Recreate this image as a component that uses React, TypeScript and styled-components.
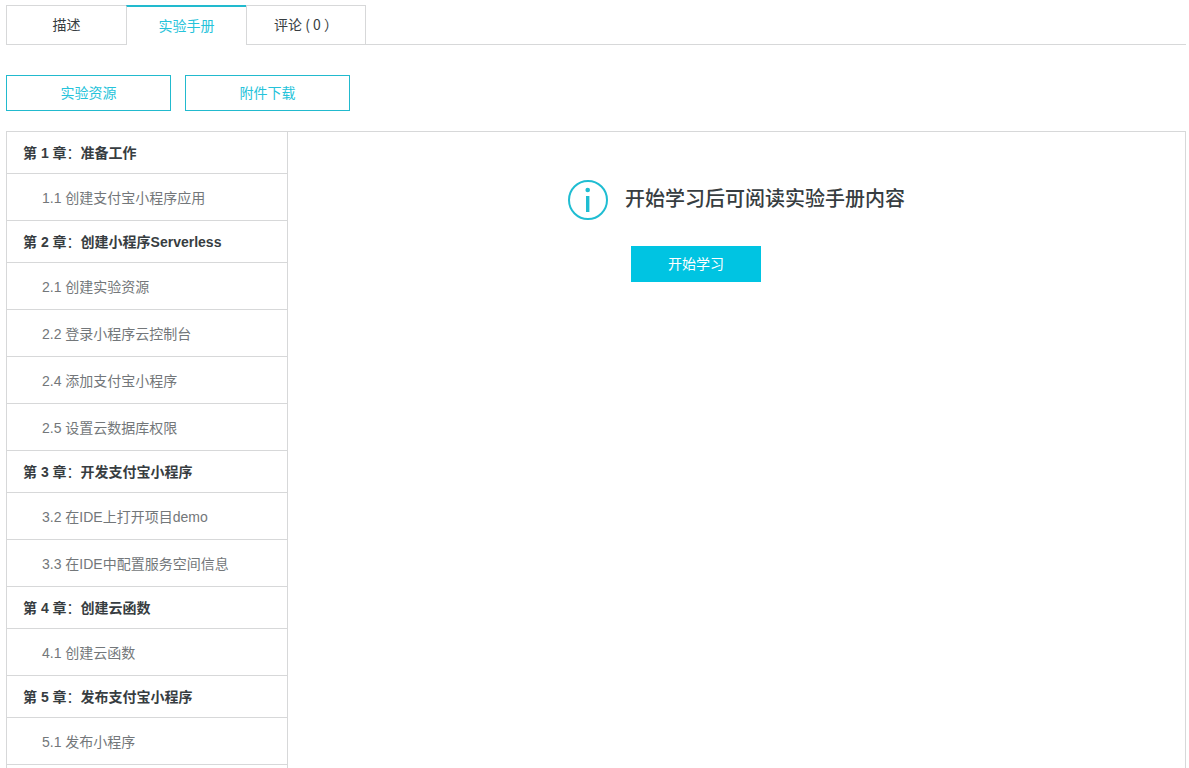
import React from "react";
import styled, { createGlobalStyle, css } from "styled-components";

const GlobalStyle = createGlobalStyle`
  * { box-sizing: border-box; }
  body {
    margin: 0;
    background: #fff;
    color: #373d41;
    font: 14px/20px "Liberation Sans", "Noto Sans CJK SC", sans-serif;
  }
  button { font: inherit; cursor: pointer; }
`;

const line = "#d7d8d9";
const accent = "#22bace";

const Page = styled.div`
  display: flex;
  flex-direction: column;
  height: 100vh;
  overflow: hidden;
  padding: 5px 3px 0 6px;
`;

const TabBar = styled.div`
  display: flex;
  flex-shrink: 0;
  height: 40px;

  &::after {
    content: "";
    flex: 1;
    border-bottom: 1px solid ${line};
  }
`;

const Tab = styled.button<{ $active?: boolean }>`
  width: 120px;
  padding: 0 0 2px;
  background: #fff;
  border: 1px solid ${line};
  border-right-width: 0;
  color: #373d41;
  font-family: "Noto Sans CJK SC", sans-serif;

  &:last-child {
    border-right-width: 1px;
  }

  ${(p) =>
    p.$active &&
    css`
      color: #25c3da;
      border-top: 2px solid ${accent};
      border-bottom: 0;
    `}
`;

const Actions = styled.div`
  display: flex;
  flex-shrink: 0;
  gap: 14px;
  margin: 30px 0 20px;
`;

const Button = styled.button<{ $primary?: boolean }>`
  width: ${(p) => (p.$primary ? 130 : 165)}px;
  height: 36px;
  padding: 0;
  background: ${(p) => (p.$primary ? "#00c4e2" : "#fff")};
  border: 1px solid ${(p) => (p.$primary ? "#00c4e2" : accent)};
  color: ${(p) => (p.$primary ? "#fff" : "#25c3da")};
`;

const Manual = styled.div`
  display: flex;
  flex: 1;
  min-height: 0;
  border: 1px solid ${line};
  border-bottom: 0;
`;

const Sidebar = styled.nav`
  flex: 0 0 281px;
  border-right: 1px solid ${line};
`;

const Chapter = styled.h2`
  display: flex;
  align-items: center;
  height: 42px;
  margin: 0;
  padding: 0 16px;
  border-bottom: 1px solid ${line};
  font-size: 14px;
  font-weight: 700;
`;

const Colon = styled.span`
  font-weight: 400;
`;

const Lessons = styled.ul`
  margin: 0;
  padding: 0;
  list-style: none;
`;

const Lesson = styled.a`
  display: flex;
  align-items: center;
  height: 47px;
  padding: 2px 16px 0 35px;
  border-bottom: 1px solid ${line};
  color: #73777a;
  text-decoration: none;
`;

const Content = styled.main`
  display: flex;
  flex: 1;
  justify-content: center;
  align-items: flex-start;
  gap: 17px;
  padding-top: 48px;
`;

const Notice = styled.div`
  display: flex;
  flex-direction: column;
  gap: 28px;
`;

const NoticeTitle = styled.h1`
  margin: 0;
  font-size: 20px;
  line-height: 38px;
  font-weight: 500;
`;

const NoticeAction = styled.div`
  padding-left: 6px;
`;

const chapters = [
  { title: "准备工作", lessons: ["1.1 创建支付宝小程序应用"] },
  {
    title: "创建小程序Serverless",
    lessons: [
      "2.1 创建实验资源",
      "2.2 登录小程序云控制台",
      "2.4 添加支付宝小程序",
      "2.5 设置云数据库权限",
    ],
  },
  {
    title: "开发支付宝小程序",
    lessons: ["3.2 在IDE上打开项目demo", "3.3 在IDE中配置服务空间信息"],
  },
  { title: "创建云函数", lessons: ["4.1 创建云函数"] },
  { title: "发布支付宝小程序", lessons: ["5.1 发布小程序"] },
];

const InfoIcon = () => (
  <svg width="40" height="40" viewBox="0 0 40 40" aria-hidden="true">
    <circle cx="20" cy="20" r="19" fill="none" stroke="#1fbdd2" strokeWidth="2" />
    <circle cx="19.7" cy="10" r="2.3" fill="#1fbdd2" />
    <rect x="18" y="16" width="3.4" height="16" fill="#1fbdd2" />
  </svg>
);

export default function App() {
  return (
    <>
      <GlobalStyle />
      <Page>
        <TabBar>
          <Tab type="button">描述</Tab>
          <Tab type="button" $active>
            实验手册
          </Tab>
          <Tab type="button">评论 ( 0 ）</Tab>
        </TabBar>
        <Actions>
          <Button type="button">实验资源</Button>
          <Button type="button">附件下载</Button>
        </Actions>
        <Manual>
          <Sidebar>
            {chapters.map((chapter, index) => (
              <section key={chapter.title}>
                <Chapter>
                  第 {index + 1} 章<Colon>：</Colon>
                  {chapter.title}
                </Chapter>
                <Lessons>
                  {chapter.lessons.map((lesson) => (
                    <li key={lesson}>
                      <Lesson href="#">{lesson}</Lesson>
                    </li>
                  ))}
                </Lessons>
              </section>
            ))}
          </Sidebar>
          <Content>
            <InfoIcon />
            <Notice>
              <NoticeTitle>开始学习后可阅读实验手册内容</NoticeTitle>
              <NoticeAction>
                <Button type="button" $primary>
                  开始学习
                </Button>
              </NoticeAction>
            </Notice>
          </Content>
        </Manual>
      </Page>
    </>
  );
}
